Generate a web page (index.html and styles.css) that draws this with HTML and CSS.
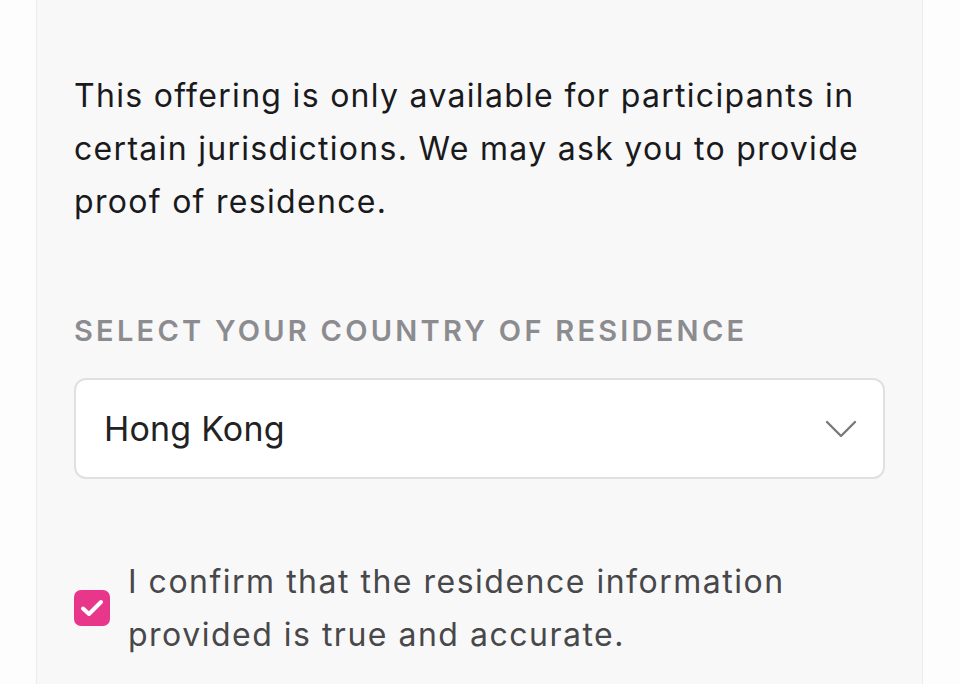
FILE: index.html
```html
<!DOCTYPE html>
<html lang="en">
<head>
<meta charset="utf-8">
<title>Residence</title>
<link rel="stylesheet" href="styles.css">
</head>
<body>
<div class="panel">
  <p class="intro">This offering is only available for participants in certain jurisdictions. We may ask you to provide proof of residence.</p>
  <div class="label">SELECT YOUR COUNTRY OF RESIDENCE</div>
  <div class="select">
    <span class="value">Hong Kong</span>
    <svg class="chev" width="32" height="18" viewBox="0 0 32 18"><path d="M2 2 L16 16 L30 2" fill="none" stroke="#7a7a7e" stroke-width="2.4" stroke-linecap="round" stroke-linejoin="round"/></svg>
  </div>
  <label class="confirm">
    <span class="box"><svg width="24" height="20" viewBox="0 0 24 20"><path d="M3 10.5 L9 16 L21 4" fill="none" stroke="#fff" stroke-width="4" stroke-linecap="round" stroke-linejoin="round"/></svg></span>
    <span class="ctext">I confirm that the residence information provided is true and accurate.</span>
  </label>
</div>
</body>
</html>
```
FILE: styles.css
```css
html, body {
  margin: 0;
  padding: 0;
  background: #fdfdfd;
  height: 684px;
  overflow: hidden;
}
.panel {
  margin-left: 36px;
  width: 887px;
  height: 684px;
  box-sizing: border-box;
  background: #f8f8f9;
  border-left: 1px solid #ebebed;
  border-right: 1px solid #ebebed;
  padding: 69px 0 0 37px;
  font-family: Inter, "Noto Sans", sans-serif;
}
.intro {
  margin: 0;
  width: 800px;
  font-size: 32px;
  line-height: 53px;
  letter-spacing: 1.3px;
  color: #1a1a1c;
}
.label {
  margin-top: 86px;
  font-size: 29px;
  font-weight: 600;
  letter-spacing: 3.25px;
  color: #8c8c90;
  line-height: 34px;
}
.select {
  margin-top: 30px;
  width: 811px;
  height: 101px;
  box-sizing: border-box;
  background: #fff;
  border: 2px solid #e0e0e2;
  border-radius: 12px;
  display: flex;
  align-items: center;
  justify-content: space-between;
  padding: 0 26px 0 28px;
}
.value {
  font-size: 34px;
  letter-spacing: 0.2px;
  color: #222;
}
.chev { display: block; }
.confirm {
  margin-top: 76px;
  display: flex;
  align-items: center;
  gap: 18px;
}
.box {
  flex: none;
  width: 36px;
  height: 36px;
  border-radius: 7px;
  background: #e8378b;
  display: flex;
  align-items: center;
  justify-content: center;
}
.box svg { display: block; }
.ctext {
  width: 720px;
  font-size: 32px;
  line-height: 53px;
  letter-spacing: 1.5px;
  color: #48484a;
}
```
